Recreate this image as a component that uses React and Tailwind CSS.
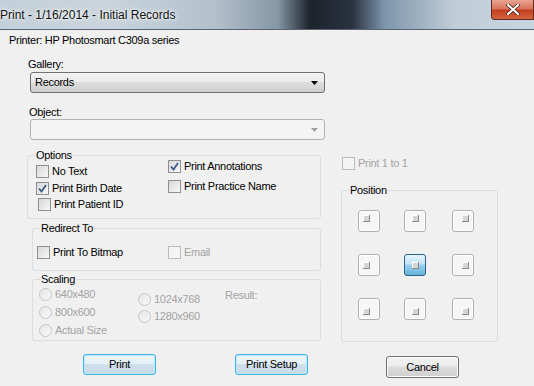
import { useState } from 'react';

// Win7-style checkbox (13x13)
function Check({ checked, disabled, label, className = '' }) {
  return (
    <div className={`flex h-[13px] items-center gap-[3px] ${className}`}>
      <span
        className={`relative flex h-[13px] w-[13px] shrink-0 items-center justify-center border ${
          disabled ? 'border-[#bcbcbc] bg-[#f4f4f4]' : 'border-[#8e8f8f] bg-[linear-gradient(135deg,#d8d8d8,#f7f7f7)]'
        }`}
      >
        {checked && (
          <svg width="9" height="9" viewBox="0 0 9 9">
            <path d="M1 4.5 L3.5 7.5 L8 1" fill="none" stroke="#3d5a8a" strokeWidth="1.8" />
          </svg>
        )}
      </span>
      <span className={`leading-[13px] ${disabled ? 'text-[#a3a3a3]' : 'text-black'}`}>{label}</span>
    </div>
  );
}

// Disabled radio button
function Radio({ label, className = '' }) {
  return (
    <div className={`flex h-[13px] items-center gap-[3px] ${className}`}>
      <span className="h-[13px] w-[13px] shrink-0 rounded-full border border-[#c6c6c6] bg-[linear-gradient(135deg,#e6e6e6,#f8f8f8)]" />
      <span className="leading-[13px] text-[#a3a3a3]">{label}</span>
    </div>
  );
}

// Group box with a caption sitting on the top border
function Group({ label, className = '', children }) {
  return (
    <div className={`relative rounded-[3px] border border-[#d5dfe5] ${className}`}>
      <span className="absolute -top-[7px] left-[7px] bg-[#f0f0f0] px-[1px] leading-[13px]">{label}</span>
      {children}
    </div>
  );
}

function Button({ children, primary, className = '' }) {
  return (
    <button
      className={`flex h-[21px] w-[73px] items-center justify-center rounded-[3px] border leading-[13px] text-black ${
        primary
          ? 'border-[#3bb3e6] bg-[linear-gradient(#eef7fc_0%,#e3f0f8_45%,#cfe0ea_50%,#c6dae6_100%)] shadow-[inset_0_0_0_1px_#bfe9fb]'
          : 'border-[#707070] bg-[linear-gradient(#f2f2f2_0%,#ebebeb_45%,#dddddd_50%,#cfcfcf_100%)] shadow-[inset_0_0_0_1px_#fbfbfb]'
      } ${className}`}
    >
      {children}
    </button>
  );
}

// Position grid button with small alignment square
function PosButton({ h, v, selected, className = '' }) {
  const justify = h === 0 ? 'justify-start' : h === 1 ? 'justify-center' : 'justify-end';
  const align = v === 0 ? 'items-start' : v === 1 ? 'items-center' : 'items-end';
  return (
    <div
      className={`flex h-[22px] w-[22px] rounded-[3px] border p-[4px] ${justify} ${align} ${
        selected
          ? 'border-[#2c628b] bg-[linear-gradient(#e5f4fc_0%,#c4e5f6_45%,#98d1ef_50%,#68b3db_100%)]'
          : 'border-[#b0b0b0] bg-[#f6f6f6] shadow-[inset_0_0_0_1px_#ffffff]'
      } ${className}`}
    >
      <span className="h-[7px] w-[7px] border-b border-r border-[#8a8a8a] bg-[#d4d4d4] shadow-[inset_1px_1px_0_#ffffff]" />
    </div>
  );
}

export default function App() {
  const [gallery] = useState('Records');

  return (
    <div className="h-[386px] w-[534px] overflow-hidden bg-[#f0f0f0] font-['Liberation_Sans',Arial,sans-serif] text-[11px] tracking-[-0.3px] text-black">
      {/* Title bar (Aero glass, blurred desktop behind) */}
      <div className="relative flex h-[30px] items-center border-b border-[#5a6470] bg-[linear-gradient(90deg,#c4d0d9_0%,#c9d4dc_20%,#b3c1cc_40%,#8697a6_52%,#1d232b_58%,#2a3240_66%,#7d95ab_72%,#c0cdd8_85%,#c9d5de_100%)]">
        <span className="font-['Liberation_Sans',Arial,sans-serif] text-[12px] tracking-normal text-[#111] [text-shadow:0_0_6px_#ffffff,0_0_3px_#ffffff]">
          Print - 1/16/2014 - Initial Records
        </span>
        <div className="absolute right-0 top-0 flex h-[20px] w-[43px] items-center justify-center rounded-bl-[4px] border border-t-0 border-[#5b2a22] bg-[linear-gradient(#e9a492_0%,#d9735c_45%,#c2401f_55%,#d5633f_100%)]">
          <svg width="14" height="11" viewBox="0 0 14 11">
            <path d="M2 1 L12 10 M12 1 L2 10" stroke="#4a2a24" strokeWidth="3.6" strokeLinecap="square" />
            <path d="M2 1 L12 10 M12 1 L2 10" stroke="#ffffff" strokeWidth="2" strokeLinecap="square" />
          </svg>
        </div>
      </div>

      <div className="pl-[9px] pt-[4px] leading-[13px]">Printer: HP Photosmart C309a series</div>

      <div className="flex">
        {/* Left column */}
        <div className="ml-[27px] flex w-[297px] flex-col">
          <div className="ml-[1px] mt-[11px] leading-[13px]">Gallery:</div>
          <div className="ml-[3px] mt-[1px] flex h-[21px] w-[295px] items-center justify-between rounded-[3px] border border-[#707070] bg-[linear-gradient(#f2f2f2_0%,#ebebeb_45%,#dddddd_50%,#cfcfcf_100%)] pl-[4px] pr-[6px]">
            <span className="leading-[13px]">{gallery}</span>
            <svg width="7" height="4" viewBox="0 0 7 4">
              <path d="M0 0 H7 L3.5 4 Z" fill="#000" />
            </svg>
          </div>
          <div className="ml-[2px] mt-[13px] leading-[13px]">Object:</div>
          <div className="ml-[3px] flex h-[21px] w-[295px] items-center justify-end rounded-[3px] border border-[#adb2b5] bg-[#f4f4f4] pr-[6px]">
            <svg width="7" height="4" viewBox="0 0 7 4">
              <path d="M0 0 H7 L3.5 4 Z" fill="#a0a0a0" />
            </svg>
          </div>

          <Group label="Options" className="mt-[15px] h-[64px] w-[294px]">
            <div className="flex pl-[8px]">
              <div className="flex w-[132px] flex-col pt-[9px]">
                <Check label="No Text" />
                <Check label="Print Birth Date" checked className="mt-[4px]" />
                <Check label="Print Patient ID" className="ml-[2px] mt-[3px]" />
              </div>
              <div className="flex flex-col gap-[7px] pt-[4px]">
                <Check label="Print Annotations" checked />
                <Check label="Print Practice Name" />
              </div>
            </div>
          </Group>

          <Group label="Redirect To" className="ml-[5px] mt-[9px] h-[43px] w-[289px]">
            <div className="flex pl-[4px] pt-[17px]">
              <Check label="Print To Bitmap" className="w-[131px]" />
              <Check label="Email" disabled />
            </div>
          </Group>

          <Group label="Scaling" className="ml-[5px] mt-[8px] h-[62px] w-[289px]">
            <div className="flex pl-[6px] pt-[8px]">
              <div className="flex w-[99px] flex-col gap-[5px]">
                <Radio label="640x480" />
                <Radio label="800x600" />
                <Radio label="Actual Size" />
              </div>
              <div className="flex w-[87px] flex-col gap-[4px] pt-[5px]">
                <Radio label="1024x768" />
                <Radio label="1280x960" />
              </div>
              <div className="pt-[1px] leading-[13px] text-[#a3a3a3]">Result:</div>
            </div>
          </Group>

          <div className="mt-[13px] flex">
            <Button primary className="ml-[56px]">Print</Button>
            <Button primary className="ml-[79px]">Print Setup</Button>
          </div>
        </div>

        {/* Right column */}
        <div className="ml-[17px] flex w-[157px] flex-col">
          <Check label="Print 1 to 1" disabled className="ml-[1px] mt-[110px]" />
          <Group label="Position" className="mt-[20px] h-[152px] w-[157px]">
            <div className="flex flex-col gap-[22px] pl-[16px] pt-[19px]">
              {[0, 1, 2].map((v) => (
                <div key={v} className="flex">
                  <PosButton h={0} v={v} />
                  <PosButton h={1} v={v} selected={v === 1} className="ml-[24px]" />
                  <PosButton h={2} v={v} className="ml-[26px]" />
                </div>
              ))}
            </div>
          </Group>
          <Button className="ml-[45px] mt-[14px] h-[22px]">Cancel</Button>
        </div>
      </div>
    </div>
  );
}
